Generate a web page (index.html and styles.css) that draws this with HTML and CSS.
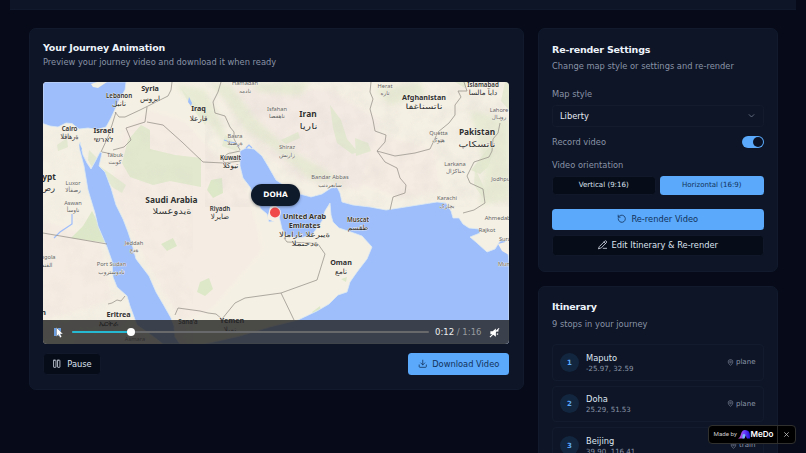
FILE: index.html
```html
<!DOCTYPE html>
<html lang="en">
<head>
<meta charset="utf-8">
<title>Your Journey Animation</title>
<link rel="stylesheet" href="styles.css">
</head>
<body>
<div class="topbar"></div>
<main class="layout">
  <section class="card preview">
    <h2>Your Journey Animation</h2>
    <p class="sub">Preview your journey video and download it when ready</p>
    <div class="player">
      <svg class="map" viewBox="43 82 466 262">
        <defs>
          <filter id="soft" x="-30%" y="-30%" width="160%" height="160%"><feGaussianBlur stdDeviation="2.5"/></filter>
          <filter id="relief" x="0" y="0" width="100%" height="100%"><feTurbulence type="fractalNoise" baseFrequency=".06" numOctaves="4" seed="8"/><feColorMatrix values="0 0 0 0 .7  0 0 0 0 .66  0 0 0 0 .62  1.6 0 0 0 -.62"/></filter>
        </defs>
        <rect x="43" y="82" width="466" height="262" fill="#f5f0e4"/>
        <g filter="url(#soft)">
          <path fill="#f5ece3" d="M150 110L185 122L215 155L240 165L250 200L262 250L210 310L180 320L135 240L110 190L125 130ZM43 220L100 240L112 300L43 320ZM365 130L435 150L440 190L400 198L350 180Z"/>
          <path fill="#f3eae3" d="M215 85L330 90L380 120L360 190L300 180L240 130Z"/>
        </g>
        <g fill="#dde8c9">
          <path d="M128 140L141 125L150 130L150 149L175 155L201 158L201 187L170 181L153 185L130 177L122 163Z" opacity=".85"/>
          <path d="M98 165L108 172L126 185L122 193L112 187Z" opacity=".7"/>
          <path d="M92 211L100 226L108 243L71 238L83 226Z"/>
          <path d="M89 150L97 158L92 167L88 160ZM57 145L67 138L68 147L58 151Z" opacity=".7"/>
          <path d="M161 244L173 238L177 246L167 251ZM200 282L209 278L213 289L205 296L197 292ZM211 180L222 178L223 193L213 198L207 190Z"/>
          <path d="M312 312L320 306L321 312L314 315ZM341 279L347 277L346 282Z"/>
          <path d="M330 105L341 120L347 139L358 152L352 154L337 143L333 128ZM355 138L368 143L371 151L356 156ZM479 160L492 143L493 153L488 167L480 174L471 170ZM281 140L298 132L300 138L286 144ZM455 82L468 82L465 88Z" opacity=".75"/>
          <path d="M180 87L192 100L210 116L205 125L190 105ZM225 135L240 146L237 151L222 146ZM475 168L486 192L483 198L474 185ZM505 82L509 82V110L501 101Z" opacity=".6"/>
        </g>
        <g fill="#e3e9cf" filter="url(#soft)" opacity=".75">
          <path d="M210 84L225 100L245 130L275 150L310 180L345 183L325 170L290 150L255 118L230 84ZM250 84L310 82L300 96L260 92ZM375 90L420 82L425 95L390 105ZM470 110L509 120L509 200L480 205L485 170Z"/>
          <path d="M175 84L205 90L222 125L230 150L215 130Z"/>
        </g>
        <rect x="205" y="82" width="304" height="125" filter="url(#relief)" opacity=".35"/>
        <rect x="43" y="130" width="150" height="214" filter="url(#relief)" opacity=".16"/>
        <path class="sea" d="M43 82H126L125 90L120 98L116 107L111 118L106 127L97 129.500L88 128L79 129L72 123.500L66 123L58 127L50 126L43 123.500Z"/>
        <path fill="#f2efe3" d="M91 84L97 82H107L101 86L98 88L93 87Z"/>
        <path class="sea" d="M80 142L83 155L87 163L91 169L96 160L100 152L102 153L99 166L105 172L111 188L116 205L123 219L128 232L132 244L136 259L149 276L156 292L163 304L171 318L174 326L175 337L180 344H163L150 334L137 325L130 306L127 296L117 287L113 277L112 261L107 247L98 226L95 213L88 190L84 166L80 151Z"/>
        <path class="sea" d="M240 151L246 148L254 149L262 156L268 166L276 180L288 188L300 194L311 197L322 194L331 188L337 187L340 193L342 202L353 205L370 207L386 210L399 208L418 205L437 202L446 203L451 211L453 218L459 218L463 224L469 228L479 229L480 233L470 237L477 243L487 252L495 249L500 241L505 240L508 252L509 263V344H205L240 336L270 327L298 320L317 311L329 304L338 295L347 292L350 282L357 272L367 259L372 247L362 236L351 232L339 228L333 222L331 215L330 203L325 211L322 221L312 235L300 238L287 236L282 229L279 216L275 221L269 222L267 214L261 209L254 196L250 187L243 178L240 166Z"/>
        <path fill="#f5efe4" d="M267 219L270 207L276 205L280 216L275 222ZM498 244L509 241V255L502 251Z"/>
        <path fill="#9dbdfb" d="M189 97L192 103L191 106L188 102ZM79 143L82 149L80 151Z"/>
        <g class="river"><path d="M72 214L72 224L66 228L60 232L54 238"/><path d="M224 140L230 142L236 143L239 147M246 148L249 145L252 148"/></g>
        <g class="border">
          <path d="M172 82L171 90L168 96L146 107L140 110L125 117L119 117L115 112M116 112L112 125L108 137L101 152M113 150L124 147L131 140L126 128L145 122L147 107M147 122L163 125L182 142L203 162L224 163M102 152L113 154"/>
          <path d="M221 82L218 92L213 102L215 113L225 116L230 127L234 132L234 139L240 150M224 163L240 161M226 163C220 162 225 153 231 153L240 151"/>
          <path d="M371 82L370 92L373 99L370 109L373 120L375 131L386 135L385 142L377 151L385 162L397 168L400 178L406 185L405 193L393 197L390 210M377 151L395 156L415 153L430 149L438 132L449 123L455 115L455 105L461 97L458 91L467 91L464 82"/>
          <path d="M500 123L498 133L493 139L492 151L489 157L474 162L467 176L470 183L483 189L485 203L474 210L463 213M43 233L107 244M108 304L112 303L117 300L121 301L125 296M200 311L208 313L216 314L222 319L235 303L245 298L281 293L317 280L325 254L318 244L310 243L287 242L284 238M281 293L294 320M175 315L178 308L200 311"/>
        </g>
        <g class="label major">
          <text x="150" y="90.500">Syria</text><text class="native" x="150" y="101">سوريا</text>
          <text x="198.500" y="111">Iraq</text><text class="native" x="198.500" y="121">العراق</text>
          <text x="103.500" y="133">Israel</text><text class="native" x="103.500" y="142">ישראל</text>
          <text x="424" y="99.500">Afghanistan</text><text class="native" x="424" y="109" textLength="37" lengthAdjust="spacingAndGlyphs">افغانستان</text>
          <text x="230.500" y="160" class="compact">Kuwait</text><text class="native" x="230.500" y="168">الكويت</text>
          <text x="220" y="210.500" class="compact">Riyadh</text><text class="native" x="220" y="219">الرياض</text>
          <text x="304.500" y="218.500">United Arab</text><text x="304.500" y="227.500">Emirates</text><text class="native" x="304.500" y="237" textLength="51" lengthAdjust="spacingAndGlyphs">الإمارات العربية</text><text class="native" x="305" y="245.500" textLength="27" lengthAdjust="spacingAndGlyphs">المتحدة</text>
          <text x="358" y="222" class="compact">Muscat</text><text class="native" x="358" y="230">مسقط</text>
          <text x="341" y="264.500">Oman</text><text class="native" x="341" y="274">عمان</text>
          <text x="118.500" y="317">Eritrea</text><text x="108" y="326">ኤርትራ</text>
          <text x="232" y="323">Yemen</text><text class="native" x="230" y="332">اليمن</text><text x="188" y="324" class="compact">Sana'a</text>
          <text x="43.500" y="315">n</text><text x="69.500" y="131" class="compact">Cairo</text><text class="native" x="69.500" y="139" textLength="18" lengthAdjust="spacingAndGlyphs">القاهرة</text>
          <text x="119" y="98" class="compact">Lebanon</text><text class="native" x="119" y="106">لبنان</text>
          <text x="483" y="87.300" class="compact">Islamabad</text><text class="native" x="483" y="95">اسلام آباد</text>
        </g>
        <g class="label huge">
          <text x="171.500" y="203">Saudi Arabia</text><text class="native" x="172" y="214" textLength="39" lengthAdjust="spacingAndGlyphs">السعودية</text>
          <text x="308" y="117">Iran</text><text class="native" x="308.500" y="128.500" textLength="18" lengthAdjust="spacingAndGlyphs">ايران</text>
          <text x="477" y="135">Pakistan</text><text class="native" x="477" y="146.500" textLength="37" lengthAdjust="spacingAndGlyphs">پاکستان</text>
          <text x="49" y="180">ypt</text><text class="native" x="48" y="190.500">صر</text>
        </g>
        <g class="label city">
          <text x="115" y="157">Tabuk</text><text class="native" x="115" y="164">تبوك</text>
          <text x="73" y="185">Luxor</text><text class="native" x="73" y="192">الأقصر</text>
          <text x="73" y="205">Aswan</text><text class="native" x="73" y="212">أسوان</text>
          <text x="134" y="245">Jeddah</text><text class="native" x="134" y="252">جدة</text>
          <text x="111.500" y="266">Port Sudan</text><text class="native" x="111.500" y="274">بورتسودان</text>
          <text x="48" y="259">ngola</text><text class="native" x="47" y="267">دنقلا</text>
          <text x="245" y="85">Hamadan</text><text class="native" x="245" y="93">همدان</text>
          <text x="277" y="111">Isfahan</text><text class="native" x="277" y="118">اصفهان</text>
          <text x="235" y="138">Basra</text><text class="native" x="235" y="145">البصرة</text>
          <text x="287" y="149">Shiraz</text><text class="native" x="287" y="157">شيراز</text>
          <text x="330" y="179">Bandar Abbas</text><text class="native" x="330" y="187">بندرعباس</text>
          <text x="385" y="88">Herat</text><text class="native" x="385" y="95">هرات</text>
          <text x="438.500" y="135">Quetta</text><text class="native" x="438.500" y="142">کوټه</text>
          <text x="499" y="112">Lahore</text><text class="native" x="499" y="119">لاہور</text>
          <text x="455" y="166">Larkana</text><text class="native" x="455" y="173">لاڑکانہ</text>
          <text x="447" y="200">Karachi</text><text class="native" x="447" y="208">کراچی</text>
          <text x="502" y="181">Jodhpur</text><text x="501" y="220">Ahmedabad</text>
          <text x="487" y="232">Rajkot</text><text x="506" y="241">Surat</text><text x="509" y="266">Mumbai</text>
          <text x="135" y="341">Asmara</text>
        </g>
        <circle cx="275" cy="212.500" r="6" fill="#f7eee9" opacity=".8"/><circle cx="275" cy="212.500" r="5" fill="#f04a4b"/>
      </svg>
      <div class="place">DOHA</div>
      <div class="controls">
        <svg class="playing" viewBox="0 0 12 12"><path fill="#6b9ee0" d="M2 2H5V10H2ZM6 2H9V10H6Z"/><path fill="#fff" stroke="#555" stroke-width=".35" d="M4.500 1.500V10.500L6.500 8.600L8.100 11.700L9.700 10.800L8.200 7.900H11Z"/></svg>
        <div class="track"><div class="played"></div><i class="thumb"></i></div>
        <span class="time">0:12 <em>/ 1:16</em></span>
        <svg class="mute" viewBox="0 0 12 12"><path fill="#fff" d="M1.500 4.500H4L7.500 1.500V10.500L4 8H1.500Z"/><path d="M1 11L11 1.500M8.500 4.500L10.500 4M8.500 7.500L10 8" stroke="#fff" stroke-width="1.200"/></svg>
      </div>
    </div>
    <div class="actions">
      <button class="btn dark pause"><svg viewBox="0 0 24 24"><rect x="4" y="3" width="6" height="18" rx="1"/><rect x="14" y="3" width="6" height="18" rx="1"/></svg>Pause</button>
      <button class="btn blue download"><svg viewBox="0 0 24 24"><path d="M12 3V15M7 10L12 15L17 10M3 15V19Q3 21 5 21H19Q21 21 21 19V15"/></svg>Download Video</button>
    </div>
  </section>
  <aside class="side">
    <section class="card settings">
      <h2>Re-render Settings</h2>
      <p class="sub">Change map style or settings and re-render</p>
      <div class="field-label first">Map style</div>
      <div class="select"><span>Liberty</span><svg viewBox="0 0 24 24"><path d="M5 9L12 16L19 9"/></svg></div>
      <div class="record"><span>Record video</span><div class="switch"><i></i></div></div>
      <div class="field-label orientation">Video orientation</div>
      <div class="pair"><button class="btn dark small">Vertical (9:16)</button><button class="btn blue small">Horizontal (16:9)</button></div>
      <div class="stack">
        <button class="btn blue"><svg viewBox="0 0 24 24"><path d="M3 12A9 9 0 1 0 6 5.300L3 8M3 3V8H8"/></svg>Re-render Video</button>
        <button class="btn dark edit"><svg viewBox="0 0 24 24"><path d="M4 16L17 3Q19 1 21 3Q23 5 21 7L8 20L2 22ZM15 5L19 9M13 21H22"/></svg>Edit Itinerary &amp; Re-render</button>
      </div>
    </section>
    <section class="card itinerary">
      <h2>Itinerary</h2>
      <p class="sub">9 stops in your journey</p>
      <div class="stops">
        <div class="stop"><b>1</b><div><strong>Maputo</strong><small>-25.97, 32.59</small></div><span><svg viewBox="0 0 24 24"><path d="M20 10C20 15 12 22 12 22S4 15 4 10A8 8 0 0 1 20 10Z"/><circle cx="12" cy="10" r="3"/></svg>plane</span></div>
        <div class="stop"><b>2</b><div><strong>Doha</strong><small>25.29, 51.53</small></div><span><svg viewBox="0 0 24 24"><path d="M20 10C20 15 12 22 12 22S4 15 4 10A8 8 0 0 1 20 10Z"/><circle cx="12" cy="10" r="3"/></svg>plane</span></div>
        <div class="stop"><b>3</b><div><strong>Beijing</strong><small>39.90, 116.41</small></div><span><svg viewBox="0 0 24 24"><path d="M20 10C20 15 12 22 12 22S4 15 4 10A8 8 0 0 1 20 10Z"/><circle cx="12" cy="10" r="3"/></svg>train</span></div>
      </div>
    </section>
  </aside>
</main>
<div class="made"><span class="by">Made by</span><svg class="logo" viewBox="0 0 12 9"><defs><linearGradient id="brand"><stop stop-color="#ef5ac5"/><stop offset=".45" stop-color="#7944ff"/><stop offset="1" stop-color="#2112db"/></linearGradient></defs><path fill="url(#brand)" d="M0 8.500Q2 8 3 4Q4 0 7 0Q12 0 12 6V8.500H9Q8 8 8 5Q7 8.500 5 8.500Z"/><path fill="#76bafa" d="M4.500 8.500V5Q6 3 7.500 5L6.500 8.500Z"/></svg><strong>MeDo</strong><span class="close"><svg viewBox="0 0 8 8"><path d="M1.500 1.500L6.500 6.500M6.500 1.500L1.500 6.500"/></svg></span></div>
</body>
</html>
```
FILE: styles.css
```css
* { box-sizing: border-box; }
html { height: 453px; overflow: hidden; }
body { margin: 0; height: 453px; overflow: hidden; background: #070b19; color: #e4eaf4; font: 8.3px/12px "DejaVu Sans", sans-serif; }
h2, p { margin: 0; }
h2 { font-size: 9.5px; line-height: 12px; letter-spacing: -.02em; font-weight: 700; color: #edf3fa; }
button { font: inherit; margin: 0; }
svg { flex: none; }
.topbar { height: 9.5px; margin: 0 10px; background: #0e1526; border-bottom: 1px solid #111a2c; }
.layout { display: grid; grid-template-columns: 495px 240px; gap: 14px; padding: 18.5px 28px 0 28.5px; align-items: start; }
.card { background: #0e1526; border: 1px solid #111b2d; border-radius: 7px; padding: 13px 13px 13px 13.5px; }
.sub, .field-label, .record { color: #8993a6; }
.preview { height: 361.5px; }
.preview h2 { margin-top: -.5px; }
.preview .sub { margin-top: 2px; }
.player { position: relative; width: 466px; height: 262px; margin-top: 14.5px; border-radius: 4px; overflow: hidden; }
.map { display: block; width: 466px; height: 262px; }
.sea { fill: #9dbdfb; stroke: #dceaf2; stroke-width: .8; }
.river { fill: none; stroke: #9dbdfb; stroke-width: 1.2; }
.border { fill: none; stroke: #9a958e; stroke-width: .8; stroke-linejoin: round; }
.label { font-family: "Noto Sans", "DejaVu Sans", sans-serif; text-anchor: middle; fill: #303030; stroke: #f8f4eb; stroke-width: .7px; paint-order: stroke; }
.major { font-size: 7.2px; font-weight: 700; }
.major .compact { font-size: 6.2px; font-weight: 600; }
.huge { font-size: 8.4px; font-weight: 700; }
.city { font-size: 5.7px; fill: #62625f; }
.label .native { font-family: "DejaVu Sans", sans-serif; font-weight: 400; direction: ltr; unicode-bidi: bidi-override; }
.place { position: absolute; left: 208px; top: 102px; width: 49px; height: 22px; border-radius: 11px; background: #0e1929; color: #fff; font: 700 7.4px/21px "DejaVu Sans", sans-serif; text-align: center; box-shadow: 0 1px 3px #25313f80; }
.controls { position: absolute; inset: auto 0 0; height: 24px; display: flex; align-items: center; padding: 0 8px 0 9px; background: rgba(36,36,36,.82); }
.playing { width: 12px; height: 12px; }
.track { position: relative; width: 357px; height: 2.5px; margin-left: 8px; border-radius: 2px; background: #68696b; }
.played { width: 58.5px; height: 100%; border-radius: inherit; background: #27b8d1; }
.thumb { position: absolute; left: 54.5px; top: -2.8px; width: 8px; height: 8px; border-radius: 50%; background: #fff; }
.time { width: 48px; margin-left: 6px; color: #eee; font-size: 8.5px; white-space: nowrap; }
.time em { font-style: normal; color: #989b9f; }
.mute { width: 11px; height: 11px; margin-left: 6px; }
.actions { display: flex; justify-content: space-between; width: 466px; margin-top: 9px; }
.btn { display: flex; align-items: center; justify-content: center; gap: 4.5px; border: 1px solid transparent; border-radius: 3.5px; height: 21.5px; padding: 0 0 .5px; white-space: nowrap; }
.btn svg { width: 9.5px; height: 9.5px; fill: none; stroke: currentColor; stroke-width: 2; stroke-linecap: round; stroke-linejoin: round; }
.blue { background: #5aa9fa; color: #13325b; }
.dark { background: #070c19; border-color: #101829; color: #dce3ef; }
.pause { width: 58px; }
.pause svg { margin-right: 1px; }
.download { width: 101px; gap: 5px; }
.side { display: grid; gap: 14px; }
.settings { height: 243.5px; }
.settings h2, .itinerary h2 { margin-top: 1.5px; }
.settings .sub, .itinerary .sub { margin-top: 4.5px; }
.first { margin-top: 15.5px; }
.select { display: flex; justify-content: space-between; align-items: center; height: 21.5px; margin-top: 5.5px; padding: 0 7px; border: 1px solid #131b2c; border-radius: 3.5px; background: #0e1526; }
.select svg { width: 9px; height: 9px; fill: none; stroke: #79869a; stroke-width: 2; }
.record { display: flex; justify-content: space-between; align-items: center; height: 13px; margin-top: 8.5px; }
.switch { width: 22px; height: 12px; padding: 1px; border-radius: 6px; background: #5aa9fa; display: flex; justify-content: flex-end; }
.switch i { width: 10px; height: 10px; border-radius: 50%; background: #0a1124; }
.orientation { margin-top: 10.5px; }
.pair { display: grid; grid-template-columns: 1fr 1fr; gap: 4.5px; margin-top: 5px; }
.small { height: 19.5px; font-size: 7.05px; }
.stack { display: grid; gap: 4.5px; margin-top: 13.5px; }
.itinerary { height: 260px; }
.stops { display: grid; gap: 5px; margin-top: 14.5px; }
.stop { display: flex; align-items: center; height: 36.5px; padding: 0 7px; border: 1px solid #121c2e; border-radius: 4px; }
.stop b { width: 19px; height: 19px; border-radius: 50%; background: #13263f; color: #5aa9fa; font-size: 7.05px; line-height: 19px; text-align: center; }
.stop div { flex: 1; margin-left: 7px; }
.stop strong, .stop small { display: block; font-weight: 400; }
.stop strong { line-height: 12px; color: #dfe6f1; }
.stop small { font-size: 7.05px; line-height: 9.5px; color: #8b95a8; }
.stop span { display: flex; align-items: center; gap: 2px; color: #8b95a8; font-size: 7.05px; }
.stop span svg { width: 7px; height: 7px; fill: none; stroke: currentColor; stroke-width: 2; }
.made { position: absolute; left: 708px; top: 424.5px; width: 88px; height: 19px; display: flex; align-items: center; padding-left: 4.5px; background: #000; border: 1px solid #30312f; border-radius: 4px; color: #fff; white-space: nowrap; }
.by { width: 24px; color: #ccc; font: 6.2px/12px Roboto, sans-serif; }
.logo { width: 12px; height: 9px; margin-left: .5px; }
.made strong { width: 26px; margin-left: .5px; font: 600 8.1px/12px Inter, sans-serif; }
.close { flex: 1; height: 17px; border-left: 1px solid #292929; display: flex; align-items: center; justify-content: center; }
.close svg { width: 7px; height: 7px; fill: none; stroke: #c5c5c5; stroke-width: .9; }
```
